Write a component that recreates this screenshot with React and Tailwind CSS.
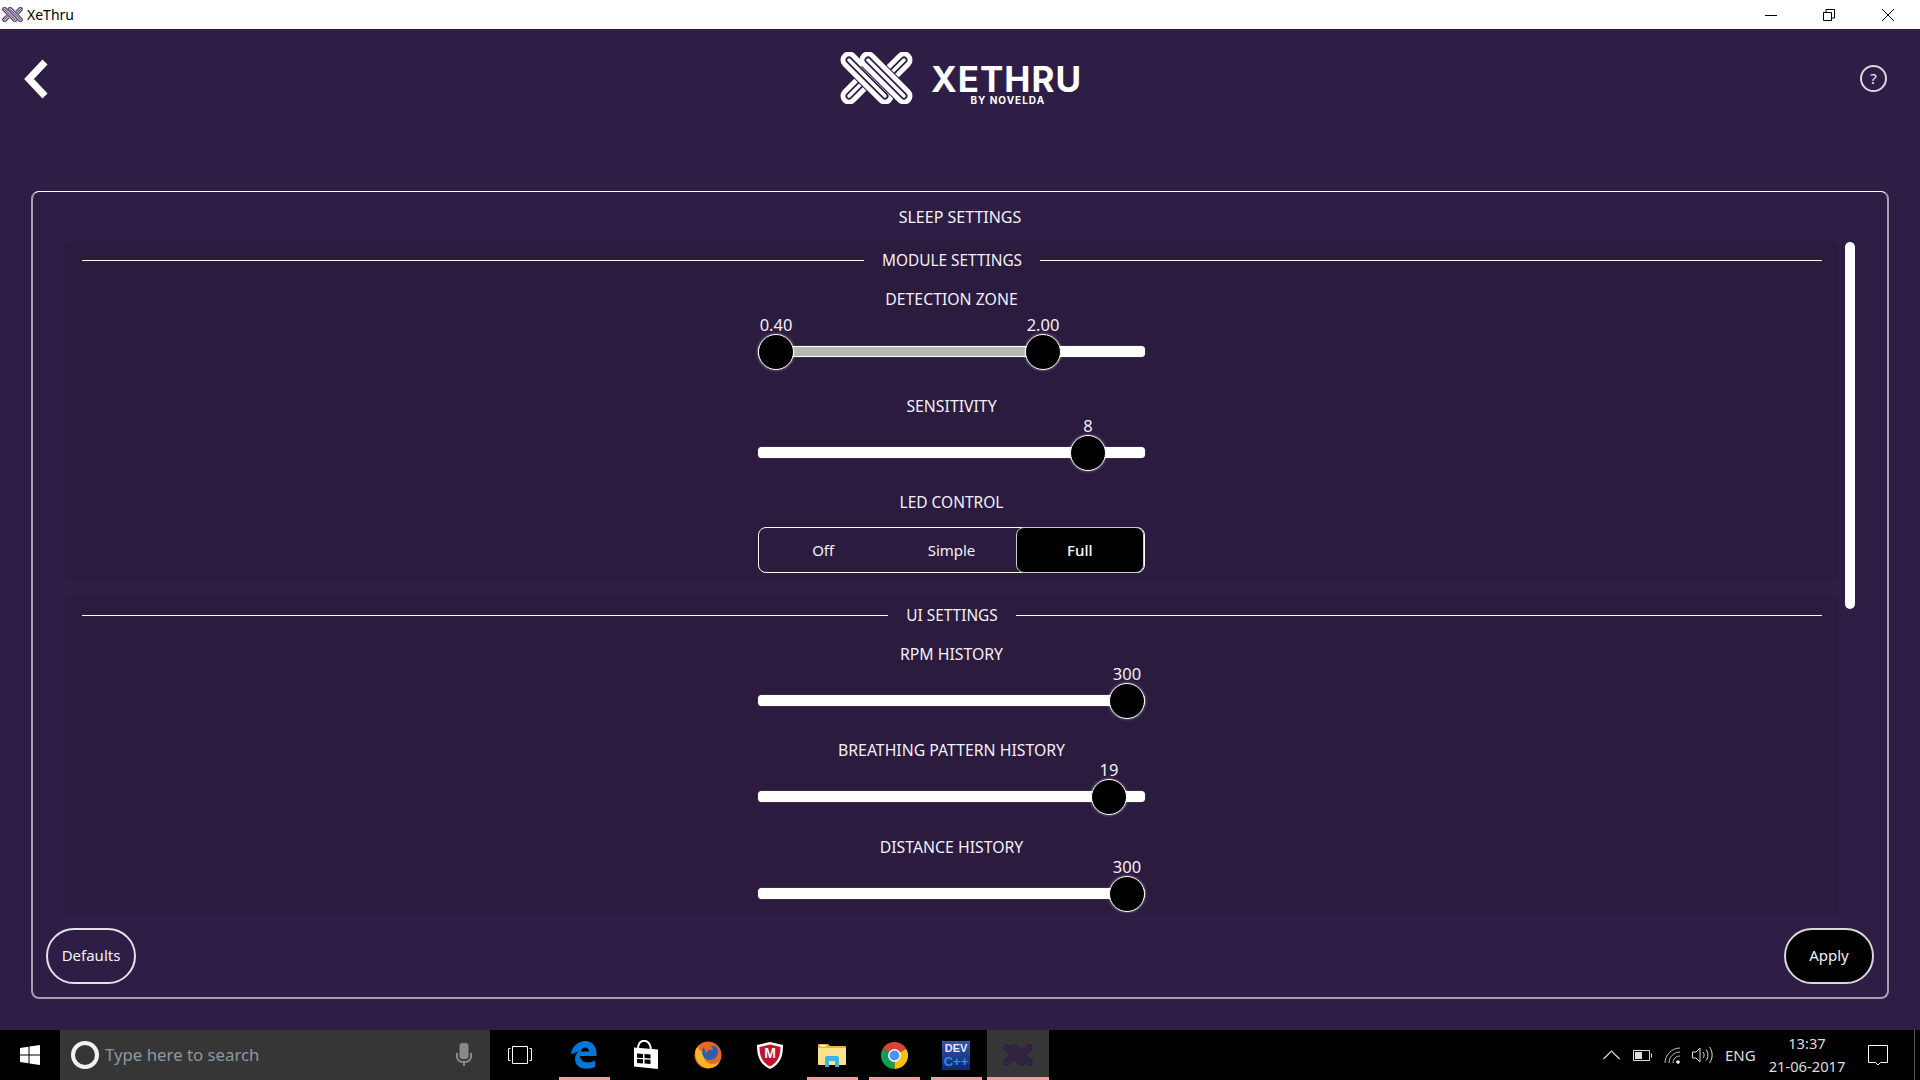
import React from 'react';

const FONT = "font-['Noto_Sans',sans-serif]";

const Logo = ({ fg, bg, className }) => {
    const under = ['M72 14 L50 36', 'M17 50 L37 30'];
    const over = ['M17 14 L53 50', 'M36 14 L72 50'];
    const band = (d, halo) => (
        <g key={d} fill="none" strokeLinecap="round">
            {halo && <path d={d} stroke={bg} strokeWidth="19" strokeLinecap="butt" />}
            <path d={d} stroke={fg} strokeWidth="17" />
            <path d={d} stroke={bg} strokeWidth="7" />
            <path d={d} stroke={fg} strokeWidth="3.500" />
        </g>
    );
    return (
        <svg viewBox="8 6 73 52" className={className}>
            {under.map(d => band(d, false))}
            {over.map(d => band(d, true))}
        </svg>
    );
};

const Slider = ({ label, values, far = false, range = false }) => (
    <div className="flex flex-col items-center w-[387px]">
        <div className={`h-[20px] leading-[20px] text-[15.8px] whitespace-nowrap ${far ? 'pt-px' : ''}`}>{label}</div>
        <div className={`relative w-full h-[36px] ${far ? 'mt-[26px]' : 'mt-[19px]'}`}>
            <div className="absolute left-0 right-0 top-[12px] h-[11px] rounded-[4px] bg-white shadow-[0_0_1px_#cfc8d8]" />
            {range && (
                <div
                    className="absolute top-[13px] h-[9px] bg-[#b6b7b7]"
                    style={{ left: values[0].x, width: values[1].x - values[0].x }}
                />
            )}
            {values.map(v => (
                <div key={v.text} className="absolute top-0 w-0 h-[36px]" style={{ left: v.x }}>
                    <div className="absolute left-[-30px] w-[60px] top-[-19px] h-[20px] leading-[20px] text-center text-[16.5px]">{v.text}</div>
                    <div className="absolute left-[-18px] top-0 w-[36px] h-[36px] rounded-full bg-black border border-white shadow-[0_0_3px_rgba(255,255,255,0.5)]" />
                </div>
            ))}
        </div>
    </div>
);

const SectionTitle = ({ children }) => (
    <div className="flex items-center gap-[18px] h-[38px] w-full pl-[18px] pr-[17px]">
        <div className="flex-1 h-px bg-white" />
        <div className="pt-[2px] text-[15.4px] whitespace-nowrap">{children}</div>
        <div className="flex-1 h-px bg-white" />
    </div>
);

const TaskCell = ({ children, open, active }) => (
    <div className={`relative w-[62px] h-full flex items-center justify-center ${active ? 'bg-[#363636]' : ''}`}>
        {children}
        {open && <div className={`absolute bottom-0 h-[3px] bg-[#f99aa2] ${active ? 'left-0 right-0' : 'left-[6px] right-[5px]'}`} />}
    </div>
);

const App = () => {
    return (
        <div className={`w-[1920px] h-[1080px] overflow-hidden flex flex-col bg-[#2e1e46] text-[#f3f1f7] ${FONT}`}>
            <div className="h-[29px] bg-white flex items-center text-black">
                <Logo fg="#5f4f74" bg="#ffffff" className="w-[21px] h-[15px] ml-[2px]" />
                <span className="ml-[4px] text-[14px]">XeThru</span>
                <div className="ml-auto flex items-center">
                    <svg width="12" height="12" className="mr-[46px]"><path d="M0 6.5H12" stroke="#000" /></svg>
                    <svg width="12" height="12" className="mr-[47px]" fill="none" stroke="#000"><path d="M.5 3.5h8v8h-8zM3 3V.5h8.5V9H9" /></svg>
                    <svg width="12" height="12" className="mr-[26px]" stroke="#000"><path d="M0 0L12 12M12 0L0 12" /></svg>
                </div>
            </div>

            <div className="h-[162px] flex items-start justify-between">
                <svg width="27" height="40" viewBox="0 0 27 40" className="ml-[22px] mt-[30px]" fill="none" stroke="#fff" strokeWidth="7">
                    <path d="M23 3 L7 20 L23 37" />
                </svg>
                <div className="flex items-start mt-[23px] ml-[13px]">
                    <Logo fg="#ffffff" bg="#2e1e46" className="w-[73px] h-[52px]" />
                    <div className="ml-[18px] flex flex-col items-end">
                        <div className="font-['Inter',sans-serif] font-bold text-[35px] leading-[30px] mt-[12px] tracking-[1px] text-white">XETHRU</div>
                        <div className="font-['Inter',sans-serif] font-bold text-[10px] leading-[10px] mt-[1px] mr-[37px] tracking-[1px] text-white">BY NOVELDA</div>
                    </div>
                </div>
                <div className="mt-[36px] mr-[33px] w-[27px] h-[27px] rounded-full border-2 border-[#dcd8e2] flex items-center justify-center text-[15px] leading-none">?</div>
            </div>

            <div className="mx-[31px] h-[808px] border-2 border-t border-[#a79eb2] border-t-white rounded-[8px] flex flex-col">
                <div className="h-[49px] flex items-center justify-center text-[16px]">SLEEP SETTINGS</div>
                <div className="h-[672px] flex overflow-hidden">
                    <div className="ml-[31px] w-[1775px] flex flex-col gap-[16px]">
                        <div className="h-[339px] shrink-0 bg-[#2a1b3f] rounded-[8px] flex flex-col items-center">
                            <SectionTitle>MODULE SETTINGS</SectionTitle>
                            <div className="h-[9px]" />
                            <Slider label="DETECTION ZONE" far range values={[{ text: '0.40', x: 18 }, { text: '2.00', x: 285 }]} />
                            <div className="h-[26px]" />
                            <Slider label="SENSITIVITY" values={[{ text: '8', x: 330 }]} />
                            <div className="h-[21px]" />
                            <div className="h-[20px] leading-[20px] text-[15.5px]">LED CONTROL</div>
                            <div className="mt-[15px] w-[387px] h-[46px] border border-white rounded-[8px] flex text-[15px]">
                                <div className="w-[129px] flex items-center justify-center">Off</div>
                                <div className="w-[129px] flex items-center justify-center">Simple</div>
                                <div className="w-[129px] -my-px bg-black border border-[#c9c9c9] rounded-[8px] flex items-center justify-center text-white font-medium">Full</div>
                            </div>
                        </div>
                        <div className="h-[400px] shrink-0 bg-[#2a1b3f] rounded-[8px] flex flex-col items-center">
                            <SectionTitle>UI SETTINGS</SectionTitle>
                            <div className="h-[10px]" />
                            <Slider label="RPM HISTORY" values={[{ text: '300', x: 369 }]} />
                            <div className="h-[21px]" />
                            <Slider label="BREATHING PATTERN HISTORY" values={[{ text: '19', x: 351 }]} />
                            <div className="h-[22px]" />
                            <Slider label="DISTANCE HISTORY" values={[{ text: '300', x: 369 }]} />
                        </div>
                    </div>
                    <div className="ml-[6px] mt-[1px] w-[10px] h-[367px] rounded-full bg-white" />
                </div>
                <div className="flex justify-between px-[13px] pt-[15px]">
                    <div className="w-[90px] h-[56px] pb-px rounded-full border-2 border-[#e4e1e8] flex items-center justify-center text-[15px]">Defaults</div>
                    <div className="w-[90px] h-[56px] pb-px rounded-full border-2 border-[#d8d8d8] bg-black flex items-center justify-center text-[15px]">Apply</div>
                </div>
            </div>

            <div className="mt-[31px] h-[50px] bg-black flex items-center relative">
                <div className="w-[60px] flex justify-center">
                    <svg width="20" height="20" viewBox="0 0 20 20" fill="#fff">
                        <path d="M0 3L8.5 1.8V9.5H0zM9.5 1.6L20 0V9.5H9.5zM0 10.5H8.5V18.2L0 17zM9.5 10.5H20V20L9.5 18.4z" />
                    </svg>
                </div>
                <div className="w-[430px] h-full bg-[#363636] flex items-center">
                    <div className="ml-[11px] w-[28px] h-[28px] rounded-full border-[4px] border-[#f2f2f2]" />
                    <span className="ml-[6px] text-[16.8px] text-[#8e98a0]">Type here to search</span>
                    <svg width="16" height="24" viewBox="0 0 16 24" className="ml-auto mr-[18px]" fill="none" stroke="#8a8a8a" strokeWidth="2">
                        <rect x="4.5" y="1" width="7" height="14" rx="2" fill="#8a8a8a" />
                        <path d="M1 10v4c0 3 3 5 7 5s7-2 7-5v-4M8 19v4" />
                    </svg>
                </div>
                <div className="w-[63px] pr-[3px] flex justify-center">
                    <svg width="24" height="18" fill="none" stroke="#fff">
                        <path d="M2.5 2.500H.5v12h2M4.500 .5h15v17h-15zM21.500 2.500h2v12h-2" />
                    </svg>
                </div>
                <div className="flex h-full">
                    <TaskCell open>
                        <svg width="26" height="28" viewBox="0 0 26 28">
                            <path fillRule="evenodd" fill="#0078d7" d="M0 13C1 5 8 0 14 0c8 0 12 6 11.500 15H9c.5 7 9 8 15 4.500V26c-8 3.500-20 2-20-8 0-3 1.500-6 4-8C5 11 2 13 0 13zM9.500 10.500H18C18 5.500 11.500 5 9.500 10.500z" />
                        </svg>
                    </TaskCell>
                    <TaskCell>
                        <svg width="26" height="30" viewBox="0 0 26 30">
                            <path d="M5 9C5 3 8 .8 11 .8s6 2 7 8.200" fill="none" stroke="#fff" strokeWidth="2" />
                            <path fill="#fff" d="M1 7.500L25 9.500V29L1 26.500z" />
                            <path fill="#000" d="M4 13.500l6 .4V18l-6-.3zM11.500 14l6 .4v4l-6-.3zM4 19l6 .3v4.200l-6-.4zM11.500 19.500l6 .3v4.200l-6-.4z" />
                        </svg>
                    </TaskCell>
                    <TaskCell>
                        <svg width="28" height="28" viewBox="0 0 28 28">
                            <circle cx="14" cy="14" r="13.500" fill="#e8681c" />
                            <path fill="#f7b52c" d="M2 8C0 14 2 24 12 27c6 1 12-2 14-7-4 4-12 4-15-1C9 15 10 12 8 10 6 10 4 9 5 5 4 6 3 7 2 8z" />
                            <circle cx="16" cy="11" r="8" fill="#2b5fb4" />
                            <path fill="#e8681c" d="M8 3c5-3 13-3 17 5-3-3-6-4-9-3 2 1 3 2 3 4-3-1-5 0-7 3-1-4-3-6-4-9z" />
                        </svg>
                    </TaskCell>
                    <TaskCell>
                        <svg width="28" height="28" viewBox="0 0 28 28">
                            <path d="M14 1L1 4c0 10 2 19 13 24C25 23 27 14 27 4z" fill="#fff" />
                            <path d="M14 3.500L3.500 6c0 8 2 15 10.500 19.500C22.500 21 24.500 14 24.500 6z" fill="#c8102e" />
                            <text x="14" y="17" textAnchor="middle" fontSize="14" fontWeight="700" fill="#fff" fontFamily="Liberation Sans">M</text>
                        </svg>
                    </TaskCell>
                    <TaskCell open>
                        <svg width="28" height="24" viewBox="0 0 28 24">
                            <path fill="#e0b83f" d="M0 2a1 1 0 011-1h9l2 2h15a1 1 0 011 1v3H0z" />
                            <path fill="#fbe28c" d="M0 5h27a1 1 0 011 1v15a1 1 0 01-1 1H1a1 1 0 01-1-1z" />
                            <path fill="#3db1ea" d="M7 24V15a2 2 0 012-2h10a2 2 0 012 2v9h-4v-6h-6v6z" />
                            <path fill="#fff" d="M2 2h6v1.500H2z" />
                        </svg>
                    </TaskCell>
                    <TaskCell open>
                        <svg width="27" height="27" viewBox="0 0 26 26">
                            <path d="M13 13L1.740 6.500A13 13 0 0124.260 6.500z" fill="#db4437" />
                            <path d="M13 13L1.740 6.500A13 13 0 0013 26z" fill="#0f9d58" />
                            <path d="M13 13L24.260 6.500A13 13 0 0113 26z" fill="#f4c20d" />
                            <circle cx="13" cy="13" r="6.200" fill="#fff" />
                            <circle cx="13" cy="13" r="4.800" fill="#4f8ff7" />
                        </svg>
                    </TaskCell>
                    <TaskCell open>
                        <div className="w-[28px] h-[29px] bg-gradient-to-b from-[#3557b0] to-[#10286b] flex flex-col items-center font-['Liberation_Sans',sans-serif] font-bold leading-none">
                            <span className="text-[11px] mt-[2px] text-[#e6ebf7]">DEV</span>
                            <span className="text-[13px] mt-[1px] text-[#2f8fe8]">C++</span>
                        </div>
                    </TaskCell>
                    <TaskCell open active>
                        <Logo fg="#2e1e46" bg="#363636" className="w-[30px] h-[22px]" />
                    </TaskCell>
                </div>
                <div className="ml-auto flex items-center h-full text-[#dedede]">
                    <svg width="17" height="10" fill="none" stroke="#dedede" strokeWidth="1.200" className="mr-[13px]"><path d="M.5 9L8.500 1l8 8" /></svg>
                    <svg width="19" height="11" className="mr-[12px]" fill="none" stroke="#dedede">
                        <path d="M.5.5h16v10H.5z" /><path d="M2 2h7v7H2z" fill="#dedede" stroke="none" /><path d="M18.500 3.500v4" />
                    </svg>
                    <svg width="17" height="17" viewBox="0 0 17 17" className="mr-[11px]" fill="none" stroke="#bdbdbd">
                        <path d="M1 16C1 8 8 1 16 1M5 16C5 10 10 5 16 5M9 16c0-4 3-7 7-7" />
                        <circle cx="14" cy="15" r="1.800" fill="#fff" stroke="none" />
                    </svg>
                    <svg width="21" height="18" viewBox="0 0 21 18" className="mr-[12px]" fill="none" stroke="#dedede">
                        <path d="M.5 6h3.500L8 2v14L4 12H.5zM11 6c1.500 2 1.500 4 0 6M14 3.500c2.500 3 2.500 8 0 11M17.500 1c3.500 4.500 3.500 11.500 0 16" />
                    </svg>
                    <span className="text-[15px] w-[27px] text-center">ENG</span>
                    <div className="ml-[17px] w-[76px] flex flex-col items-center text-[14.7px] leading-[23px] whitespace-nowrap">
                        <span>13:37</span>
                        <span>21-06-2017</span>
                    </div>
                    <svg width="21" height="21" className="ml-[23px] mr-[25px]" fill="none" stroke="#fff">
                        <path d="M.5 .5h19v17h-7l-2.500 2.500L7.500 17.500h-7z" />
                    </svg>
                    <div className="w-px h-full bg-[#555]" />
                    <div className="w-[5px]" />
                </div>
            </div>
        </div>
    );
};

export default App;
